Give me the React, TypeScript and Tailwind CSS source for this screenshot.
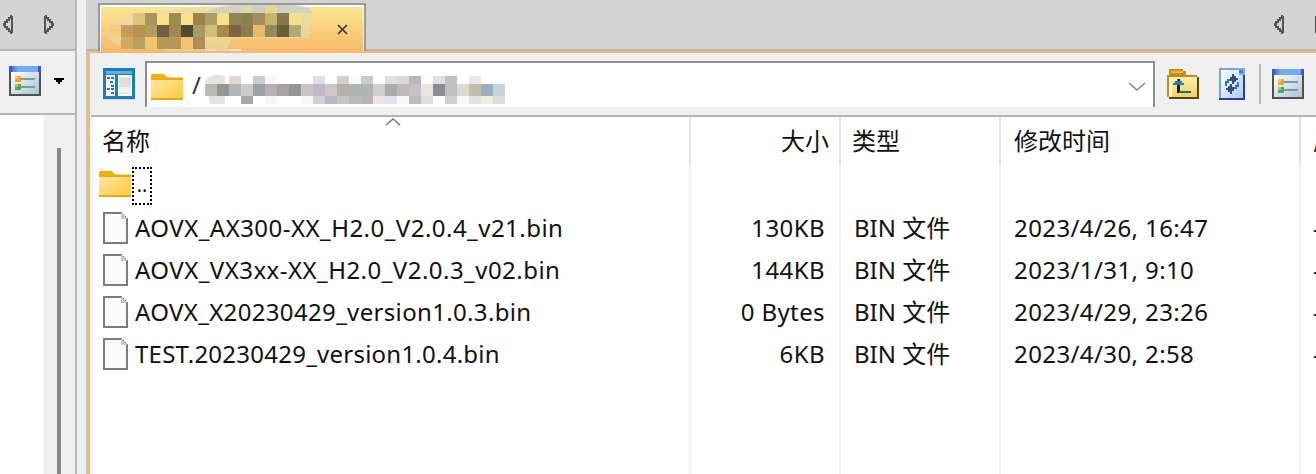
const tabRows: [number, number, string[]][] = [
  [13, 133, ['#ddc67c', '#a99460', '#f8e08c', '#a08b55', '#f8e08c', '#9e7f4e', '#ae9e66', '#f8df8a', '#8a8755', '#8a8150', '#a88c58', '#c8b56c', '#8a7750', '#f6e088']],
  [25, 109, ['#f6cd80', '#c89a5c', '#bb9250', '#b29c5e', '#715d3f', '#a18850', '#4f4a33', '#a79a63', '#cbc07a', '#a98850', '#7a6742', '#8f7c4a', '#e4bc6c', '#8c8c5c', '#6c5d38', '#b0aa72']],
  [37, 121, ['#d4a860', '#b5a060', '#f5c070', '#b29a5c', '#b89658', '#f5c070', '#b08c58']],
]

const addrRows: { y: number; h: number; cells: [number, string][] }[] = [
  {
    y: 77,
    h: 8,
    cells: [[229, '#e0d8cc'], [253, '#c8ced0'], [265, '#f4f8fc'], [313, '#e0dce8'], [337, '#d0d0d2'], [349, '#fdf8f0'], [361, '#c8ccce'], [385, '#e0e0e0'], [397, '#dcd8d4'], [409, '#c0b4b0'], [433, '#e0e0e2'], [445, '#c8c0b8'], [469, '#e8e8e6']],
  },
  {
    y: 85,
    h: 12,
    cells: ['#b8bab6', '#989694', '#b2b6bc', '#ccccc4', '#9aa2a6', '#b4b2b6', '#a8a2a4', '#949694', '#c8c4c8', '#c4b8c8', '#ccc8c8', '#b8aeac', '#acb4b4', '#b0b4b6', '#d0cecc', '#acacae', '#bcbabe', '#c8c0c8', '#ece4dc', '#8a8e92', '#c0c0c2', '#dcd8d2', '#c4bcac', '#9cb0bc', '#c8d4dc'].map((c, i): [number, string] => [205 + i * 12, c]),
  },
  {
    y: 97,
    h: 8,
    cells: [[241, '#a8a6a2'], [265, '#f4f6f6'], [301, '#f8f8f8'], [313, '#d0d0d8'], [325, '#c0b4c0'], [337, '#c0c8c4'], [349, '#b8b8c0'], [361, '#b8b4b4'], [373, '#ece4e2'], [385, '#dce4ec'], [397, '#f8f8f8'], [409, '#bebcbe'], [421, '#dcdfe6'], [445, '#d0d0d4'], [457, '#f8f8f8'], [469, '#e4e2dc'], [481, '#f0ece4'], [493, '#e0dcd4']],
  },
]

const files = [
  { name: 'AOVX_AX300-XX_H2.0_V2.0.4_v21.bin', size: '130KB', time: '2023/4/26, 16:47', track: 'tracking-[0.47px]' },
  { name: 'AOVX_VX3xx-XX_H2.0_V2.0.3_v02.bin', size: '144KB', time: '2023/1/31, 9:10', track: 'tracking-[0.47px]' },
  { name: 'AOVX_X20230429_version1.0.3.bin', size: '0 Bytes', time: '2023/4/29, 23:26', track: 'tracking-[0.34px]' },
  { name: 'TEST.20230429_version1.0.4.bin', size: '6KB', time: '2023/4/30, 2:58', track: 'tracking-[0.24px]' },
]

function LeftArrow() {
  return (
    <svg width="11" height="19" viewBox="0 0 11 19" shapeRendering="crispEdges">
      <path d="M9 1v17M9 1H8v2H6v2H4v2H2v2H1v1h1v2h2v2h2v2h2v2h1" fill="none" stroke="#555" strokeWidth="1.4" />
    </svg>
  )
}

function RightArrow() {
  return (
    <svg width="11" height="19" viewBox="0 0 11 19" shapeRendering="crispEdges">
      <path d="M2 1v17M2 1h1v2h2v2h2v2h2v2h1v1H9v2H7v2H5v2H3v2H2" fill="none" stroke="#555" strokeWidth="1.4" />
    </svg>
  )
}

function ListIcon() {
  return (
    <svg width="32" height="30" viewBox="0 0 32 30" shapeRendering="crispEdges">
      <defs>
        <linearGradient id="listbar" x1="0" x2="1" y1="0" y2="0">
          <stop offset="0" stopColor="#3f5fd8" />
          <stop offset="0.3" stopColor="#6fb0f0" />
          <stop offset="1" stopColor="#6faaf0" />
        </linearGradient>
        <linearGradient id="listbody" x1="0" x2="1" y1="0" y2="1">
          <stop offset="0" stopColor="#ffffff" />
          <stop offset="1" stopColor="#a9c2d4" />
        </linearGradient>
      </defs>
      <rect x="0" y="6" width="32" height="24" fill="#505050" />
      <rect x="2" y="6" width="28" height="22" fill="url(#listbody)" />
      <rect x="0" y="0" width="32" height="6" fill="url(#listbar)" />
      <rect x="0" y="0" width="3" height="6" fill="#3f55c8" />
      <rect x="29" y="0" width="3" height="6" fill="#3f55c8" />
      <rect x="6" y="10" width="6" height="6" fill="#f5a030" />
      <rect x="6" y="10" width="3" height="3" fill="#f8c860" />
      <rect x="12" y="12" width="14" height="2" fill="#7898ac" />
      <rect x="6" y="18" width="6" height="6" fill="#58a848" />
      <rect x="6" y="18" width="3" height="3" fill="#98d088" />
      <rect x="12" y="20" width="14" height="2" fill="#7898ac" />
    </svg>
  )
}

function PanelIcon() {
  return (
    <svg width="32" height="32" viewBox="0 0 32 32" shapeRendering="crispEdges">
      <rect x="0" y="0" width="32" height="31" fill="#1a7fb5" />
      <rect x="3" y="3" width="26" height="3" fill="#62b2dc" />
      <rect x="3" y="7" width="9" height="21" fill="#f4f8fb" />
      <rect x="15" y="7" width="14" height="21" fill="#ffffff" />
      <rect x="16" y="9" width="12" height="17" fill="#dedede" />
      <rect x="16" y="19" width="12" height="6" fill="#f0f0f0" />
      <rect x="4" y="9" width="3" height="2" fill="#666" />
      <rect x="8" y="9" width="3" height="2" fill="#1a7fb5" />
      <rect x="7" y="13" width="3" height="2" fill="#1a7fb5" />
      <rect x="8" y="17" width="3" height="2" fill="#1a7fb5" />
      <rect x="4" y="20" width="3" height="2" fill="#666" />
      <rect x="8" y="20" width="3" height="2" fill="#1a7fb5" />
      <rect x="8" y="24" width="3" height="2" fill="#1a7fb5" />
      <rect x="0" y="31" width="32" height="1" fill="#c9d6dd" />
    </svg>
  )
}

function FolderIcon({ id }: { id: string }) {
  return (
    <svg width="32" height="26" viewBox="0 0 32 26">
      <defs>
        <linearGradient id={id} x1="0" x2="1" y1="0" y2="1">
          <stop offset="0" stopColor="#ffe6a6" />
          <stop offset="1" stopColor="#fdc933" />
        </linearGradient>
      </defs>
      <path d="M0 1.5A1.5 1.5 0 0 1 1.500 0H13l3 3.500h16V8H0z" fill="#f2ae0a" />
      <rect x="0" y="6" width="32" height="20" rx="0.5" fill={`url(#${id})`} />
      <rect x="0" y="24" width="32" height="2" fill="#e6a91e" />
      <rect x="14" y="4" width="18" height="2" fill="#e6a91e" />
    </svg>
  )
}

function UpFolderIcon() {
  return (
    <svg width="32" height="30" viewBox="0 0 32 30" shapeRendering="crispEdges">
      <defs>
        <linearGradient id="upbody" x1="0" x2="0" y1="0" y2="1">
          <stop offset="0" stopColor="#fff0a8" />
          <stop offset="1" stopColor="#f5d060" />
        </linearGradient>
      </defs>
      <path d="M2 0h14v2h3v4H2z" fill="#c0901c" />
      <rect x="4" y="2" width="12" height="2" fill="#efc040" />
      <rect x="0" y="6" width="30" height="22" fill="#c48c16" />
      <rect x="2" y="8" width="28" height="20" fill="url(#upbody)" />
      <rect x="2" y="8" width="3" height="20" fill="#fffbe0" />
      <rect x="2" y="28" width="30" height="2" fill="#5f4208" />
      <rect x="30" y="8" width="2" height="22" fill="#5f4208" />
      <rect x="10" y="14" width="3" height="10" fill="#111" />
      <rect x="12" y="22" width="12" height="2" fill="#0a6ea8" />
      <path d="M6 14h2v-2h2v-2h3v2h2v2h2v2H6z" fill="#0a84c8" />
      <rect x="11" y="10" width="2" height="2" fill="#111" />
    </svg>
  )
}

function RefreshIcon() {
  const half = (
    <>
      <path d="M13 6h2v2h2v2h2v2h-2v2h-2v2h-2v-3h-2V9h2z" fill="#3b4a88" />
      <path d="M7 18v-4h2v-2h2" fill="none" stroke="#2f7f90" strokeWidth="2" />
    </>
  )
  return (
    <svg width="26" height="32" viewBox="0 0 26 32" shapeRendering="crispEdges">
      <defs>
        <linearGradient id="refbody" x1="0" x2="1" y1="0" y2="1">
          <stop offset="0" stopColor="#ffffff" />
          <stop offset="1" stopColor="#a8cdf5" />
        </linearGradient>
      </defs>
      <path d="M0 0h20l6 6v26H0z" fill="#2c3f94" />
      <path d="M0 0h20v2H2v28H0z" fill="#7b9fe0" />
      <path d="M2 2h18l4 4v24H2z" fill="url(#refbody)" />
      <path d="M18 0h8v7h-6V2h-2z" fill="#8aa8d8" />
      <rect x="20" y="2" width="4" height="3" fill="#2a8cd8" />
      {half}
      <g transform="rotate(180 13 16)">{half}</g>
    </svg>
  )
}

function FileIcon() {
  return (
    <svg width="25" height="32" viewBox="0 0 25 32" shapeRendering="crispEdges">
      <path d="M1 1h17l6 6v24H1z" fill="#fafafa" stroke="#7b7b7b" strokeWidth="2" />
      <path d="M18 1h2v2h2v2h2v2h-6z" fill="#c8c8c8" />
    </svg>
  )
}

export default function App() {
  return (
    <div
      className="flex h-[474px] w-[1316px] overflow-hidden bg-[#f0f0f0] text-[24px] leading-none text-[#111]"
      style={{ fontFamily: '"Noto Sans", "Noto Sans CJK SC", sans-serif' }}
    >
      {/* Left pane, cut off by the splitter */}
      <aside className="flex w-[75px] shrink-0 flex-col">
        <div className="flex h-[51px] items-center gap-[29px] border-b-2 border-[#b5b5b5] bg-[#d3d3d3] pl-[3px] pb-[1px]">
          <LeftArrow />
          <RightArrow />
        </div>
        <div className="flex h-[64px] items-center gap-[13px] border-b-2 border-[#b5b5b5] pl-[9px] pb-[3px]">
          <ListIcon />
          <svg width="10" height="6" viewBox="0 0 10 6" shapeRendering="crispEdges">
            <path d="M0 0h10v2H8v2H6v2H4V4H2V2H0z" fill="#000" />
          </svg>
        </div>
        <div className="flex flex-1">
          <div className="w-[43px] bg-white" />
          <div className="flex flex-1 justify-center pt-[33px] pr-px">
            <div className="h-full w-1 bg-[#878787]" />
          </div>
        </div>
      </aside>

      <div className="w-[2px] shrink-0 bg-[#b9b9b9]" />
      <div className="w-[9px] shrink-0 bg-[#f0f0f0]" />

      {/* Right pane */}
      <main className="flex min-w-0 flex-1 flex-col">
        <header className="relative flex h-[51px] shrink-0 items-end border-b-2 border-[#b5b5b5] bg-[#d3d3d3]">
          <div className="relative mb-[-2px] ml-[12px] h-[48px] w-[268px] overflow-hidden border-x-[2px] border-t-2 border-[#999] bg-white px-px pt-[2px]">
            <div className="flex h-full items-center justify-end bg-gradient-to-b from-[#fbe692] to-[#f4ba6a] pr-[15px] text-[#333]">
              <svg width="11" height="11" viewBox="0 0 11 11">
                <path d="M1 1l9 9M10 1l-9 9" stroke="#333" strokeWidth="1.6" />
              </svg>
            </div>
          </div>
          {/* Blurred tab title */}
          <svg className="absolute top-0 left-[13px]" width="240" height="51" viewBox="99 0 240 51" shapeRendering="crispEdges">
            <path d="M132 14C170 10 200 5 240 5H290C312 6 316 14 312 24L308 38H232L226 51H168L150 47 122 48 108 38 109 24Z" fill="#e6dcae" opacity="0.6" shapeRendering="auto" />
            <path d="M205 13C212 8 226 5 240 5H292C310 6 314 12 312 13Z" fill="#d2d0c4" shapeRendering="auto" />
            <rect x="241" y="5" width="12" height="8" fill="#dcd8b0" />
            <rect x="253" y="5" width="12" height="8" fill="#cfcdbd" />
            <rect x="265" y="5" width="12" height="8" fill="#dfd898" />
            {tabRows.map(([y, start, cells]) =>
              cells.map((c, i) => <rect key={`${y}-${i}`} x={start + i * 12} y={y} width="12" height="12" fill={c} />),
            )}
            <rect x="193" y="49" width="12" height="2" fill="#e8c898" />
            <rect x="205" y="49" width="12" height="2" fill="#e8dcc8" />
            <rect x="217" y="49" width="12" height="2" fill="#e8d0a8" />
            <rect x="229" y="49" width="12" height="2" fill="#e8e4dc" />
          </svg>
          <div className="absolute top-[15px] right-[31px]">
            <LeftArrow />
          </div>
          <div className="absolute top-[15px] right-[-9px]">
            <RightArrow />
          </div>
        </header>

        <div className="flex min-h-0 flex-1 flex-col border-l border-[#c4c4c4]">
          <div className="h-[2px] shrink-0 bg-[#f5b971]" />
          <div className="flex min-h-0 flex-1 border-l-[3px] border-[#f5b971]">
            <div className="flex min-w-0 flex-1 flex-col border-l border-[#f0f0f0]">
              {/* Toolbar */}
              <div className="flex h-[64px] shrink-0 items-center border-b-2 border-[#b5b5b5] pl-[12px]">
                <PanelIcon />
                <div className="ml-[10px] flex h-[46px] w-[1010px] items-center border-t-2 border-r-2 border-l-2 border-b-0 border-[#8e8e8e] bg-white pl-[4px]">
                  <div className="pt-1">
                    <FolderIcon id="addrfolder" />
                  </div>
                  <span className="ml-[9px] w-[9px] text-[#333]">/</span>
                  <svg className="ml-[4px]" width="300" height="46" viewBox="205 63 300 46" shapeRendering="crispEdges">
                    <path d="M205 82C210 76 218 74 225 77V105H210Z" fill="#e4e4e0" />
                    {addrRows.map((r) =>
                      r.cells.map(([x, c]) => <rect key={`${r.y}-${x}`} x={x} y={r.y} width="12" height={r.h} fill={c} />),
                    )}
                  </svg>
                  <div className="mr-[7px] ml-auto pt-1">
                    <svg width="18" height="10" viewBox="0 0 18 10">
                      <path d="M1 1l8 7 8-7" fill="none" stroke="#888" strokeWidth="1.5" />
                    </svg>
                  </div>
                </div>
                <div className="ml-[12px]">
                  <UpFolderIcon />
                </div>
                <div className="ml-[20px]">
                  <RefreshIcon />
                </div>
                <div className="ml-[14px] h-[40px] w-[2px] bg-[#b9b9b9]" />
                <div className="ml-[11px]">
                  <ListIcon />
                </div>
              </div>

              {/* File list */}
              <div className="relative flex min-h-0 flex-1 bg-white">
                <svg className="absolute top-0 left-[294px]" width="16" height="9" viewBox="0 0 16 9">
                  <path d="M1 8l7-6 7 6" fill="none" stroke="#777" strokeWidth="1.5" />
                </svg>

                <div className="flex w-[598px] shrink-0 flex-col">
                  <div className="flex h-[48px] items-center pl-[11px]">名称</div>
                  <div className="flex h-[42px] items-center pl-[8px]">
                    <div className="pb-[4px]">
                      <FolderIcon id="upfolder" />
                    </div>
                    <span className="ml-px flex h-[38px] w-[20px] items-end justify-center border-2 border-dotted border-black pb-[8px] text-[20px] leading-none">
                      ..
                    </span>
                  </div>
                  {files.map((f) => (
                    <div key={f.name} className="flex h-[42px] items-center pl-[12px]">
                      <FileIcon />
                      <span className={`ml-[7px] whitespace-nowrap ${f.track}`}>{f.name}</span>
                    </div>
                  ))}
                </div>

                <div className="flex w-[150px] shrink-0 flex-col">
                  <div className="flex h-[48px] items-center justify-end border-l-2 border-[#e2e2e2] pr-[10px]">大小</div>
                  <div className="flex-1 border-l-2 border-[#eef3fd] pt-[42px] pr-[14px] text-right tracking-[0.4px]">
                    {files.map((f) => (
                      <div key={f.name} className="flex h-[42px] items-center justify-end">
                        {f.size}
                      </div>
                    ))}
                  </div>
                </div>

                <div className="flex w-[160px] shrink-0 flex-col">
                  <div className="flex h-[48px] items-center border-l-2 border-[#e2e2e2] pl-[11px]">类型</div>
                  <div className="flex-1 border-l-2 border-[#eef3fd] pt-[42px] pl-[13px]">
                    {files.map((f) => (
                      <div key={f.name} className="flex h-[42px] items-center">
                        BIN 文件
                      </div>
                    ))}
                  </div>
                </div>

                <div className="flex w-[300px] shrink-0 flex-col">
                  <div className="flex h-[48px] items-center border-l-2 border-[#e2e2e2] pl-[13px]">修改时间</div>
                  <div className="flex-1 border-l-2 border-[#eef3fd] pt-[42px] pl-[13px] tracking-[0.4px]">
                    {files.map((f) => (
                      <div key={f.name} className="flex h-[42px] items-center whitespace-nowrap">
                        {f.time}
                      </div>
                    ))}
                  </div>
                </div>

                <div className="flex min-w-0 flex-1 flex-col overflow-hidden">
                  <div className="flex h-[48px] items-center border-l-2 border-[#e2e2e2] pl-[12px] whitespace-nowrap">属性</div>
                  <div className="flex-1 border-l-2 border-[#eef3fd] pt-[42px] pl-[12px]">
                    {files.map((f) => (
                      <div key={f.name} className="flex h-[42px] items-center">
                        -
                      </div>
                    ))}
                  </div>
                </div>
              </div>
            </div>
          </div>
        </div>
      </main>
    </div>
  )
}
